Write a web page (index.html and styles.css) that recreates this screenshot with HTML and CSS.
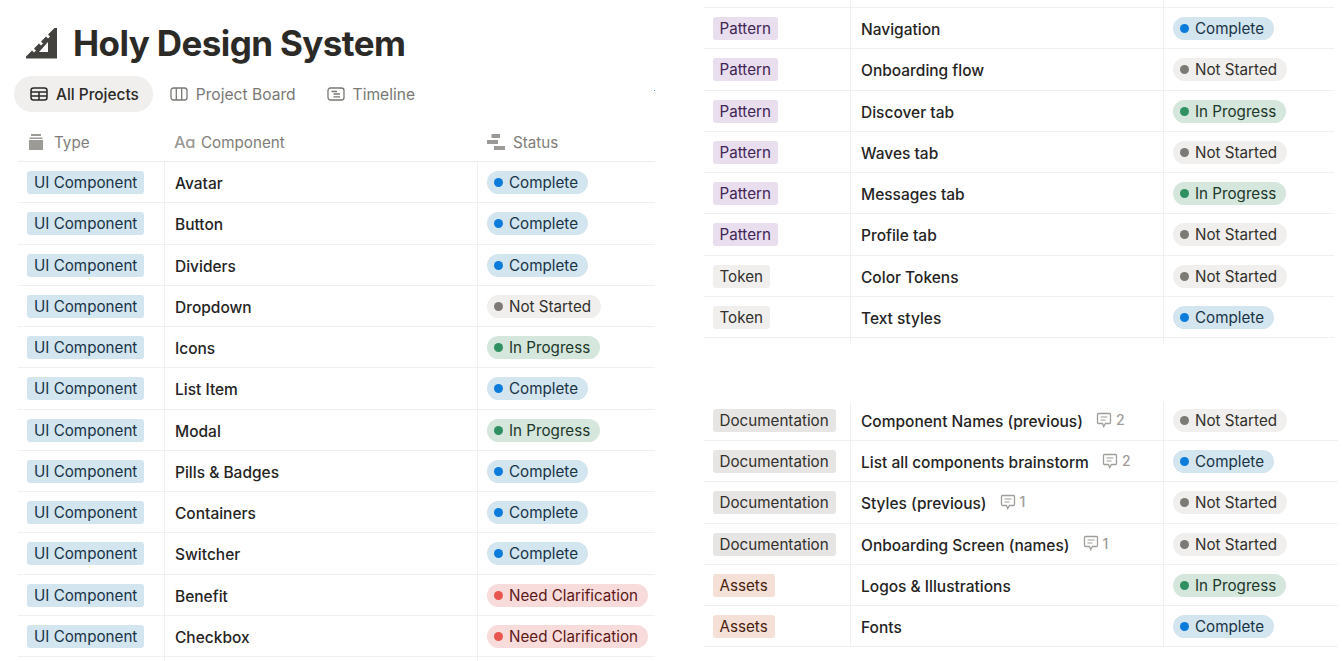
FILE: index.html
```html
<!DOCTYPE html>
<html lang="en">
<head>
<meta charset="utf-8">
<title>Holy Design System</title>
<link rel="stylesheet" href="styles.css">
</head>
<body>
<svg class="sprites" width="0" height="0" aria-hidden="true">
  <symbol id="comment" viewBox="0 0 16 16"><path d="M2.500 1.500h11a1 1 0 0 1 1 1v8a1 1 0 0 1-1 1H9.500l-1.800 3-1.200-3h-4a1 1 0 0 1-1-1v-8a1 1 0 0 1 1-1z" fill="none" stroke="currentColor" stroke-width="1.300"/><path d="M4.500 5h7M4.500 8h5" stroke="currentColor" stroke-width="1.200"/></symbol>
</svg>
<main class="page">
  <section class="left">
    <h1 class="title">
      <svg class="title-icon" viewBox="0 0 31 31"><path fill-rule="evenodd" fill="#44423e" d="M31 0V30.500H0V28.500L6 22.500L8 24.500L10 22.500L8 20.500L13 15.500L15 17.500L17 15.500L15 13.500L20 8.500L22 10.500L24 8.500L22 6.500L28.500 0ZM22 14V24H13Z"/></svg>
      <span>Holy Design System</span>
    </h1>
    <nav class="tabs">
      <a class="tab tab-active">
        <svg class="tab-icon" viewBox="0 0 18 14"><rect x="1" y="1" width="16" height="12" rx="2.500" fill="none" stroke="currentColor" stroke-width="1.500"/><path d="M1 5H17M1 9H17M9 5V13" stroke="currentColor" stroke-width="1.500" fill="none"/></svg>
        All Projects
      </a>
      <a class="tab">
        <svg class="tab-icon" viewBox="0 0 18 14"><rect x="1" y="1" width="16" height="12" rx="2.500" fill="none" stroke="currentColor" stroke-width="1.300"/><path d="M6.300 1V13M11.700 1V13" stroke="currentColor" stroke-width="1.300" fill="none"/></svg>
        Project Board
      </a>
      <a class="tab">
        <svg class="tab-icon" viewBox="0 0 18 14"><rect x="1" y="1" width="16" height="12" rx="2.500" fill="none" stroke="currentColor" stroke-width="1.300"/><path d="M4.500 4.500H10M6.500 7H13M6.500 9.800H13" stroke="currentColor" stroke-width="1.300" fill="none"/></svg>
        Timeline
      </a>
    </nav>
    <div class="table">
      <div class="row row-head">
        <div class="head-cell">
          <svg class="head-icon" viewBox="0 0 16 16"><path fill="#9b9a97" d="M3 0H13V2H3ZM1.500 3.500H14.500V5H1.500ZM1 6H15V16H1Z"/></svg>
          Type
        </div>
        <div class="head-cell head-comp"><span class="aa">Aɑ</span>Component</div>
        <div class="head-cell head-status">
          <svg class="head-icon" viewBox="0 0 18 16"><path fill="#9b9a97" d="M4.500 0H13V4H4.500ZM0 6H11V10H0ZM7 12H18V16H7Z"/></svg>
          Status
        </div>
      </div>
      <div class="row"><div class="cell"><span class="tag t-ui">UI Component</span></div><div class="cell name">Avatar</div><div class="cell"><span class="pill p-complete"><i class="dot"></i>Complete</span></div></div>
      <div class="row"><div class="cell"><span class="tag t-ui">UI Component</span></div><div class="cell name">Button</div><div class="cell"><span class="pill p-complete"><i class="dot"></i>Complete</span></div></div>
      <div class="row"><div class="cell"><span class="tag t-ui">UI Component</span></div><div class="cell name">Dividers</div><div class="cell"><span class="pill p-complete"><i class="dot"></i>Complete</span></div></div>
      <div class="row"><div class="cell"><span class="tag t-ui">UI Component</span></div><div class="cell name">Dropdown</div><div class="cell"><span class="pill p-not"><i class="dot"></i>Not Started</span></div></div>
      <div class="row"><div class="cell"><span class="tag t-ui">UI Component</span></div><div class="cell name">Icons</div><div class="cell"><span class="pill p-progress"><i class="dot"></i>In Progress</span></div></div>
      <div class="row"><div class="cell"><span class="tag t-ui">UI Component</span></div><div class="cell name">List Item</div><div class="cell"><span class="pill p-complete"><i class="dot"></i>Complete</span></div></div>
      <div class="row"><div class="cell"><span class="tag t-ui">UI Component</span></div><div class="cell name">Modal</div><div class="cell"><span class="pill p-progress"><i class="dot"></i>In Progress</span></div></div>
      <div class="row"><div class="cell"><span class="tag t-ui">UI Component</span></div><div class="cell name">Pills &amp; Badges</div><div class="cell"><span class="pill p-complete"><i class="dot"></i>Complete</span></div></div>
      <div class="row"><div class="cell"><span class="tag t-ui">UI Component</span></div><div class="cell name">Containers</div><div class="cell"><span class="pill p-complete"><i class="dot"></i>Complete</span></div></div>
      <div class="row"><div class="cell"><span class="tag t-ui">UI Component</span></div><div class="cell name">Switcher</div><div class="cell"><span class="pill p-complete"><i class="dot"></i>Complete</span></div></div>
      <div class="row"><div class="cell"><span class="tag t-ui">UI Component</span></div><div class="cell name">Benefit</div><div class="cell"><span class="pill p-need"><i class="dot"></i>Need Clarification</span></div></div>
      <div class="row"><div class="cell"><span class="tag t-ui">UI Component</span></div><div class="cell name">Checkbox</div><div class="cell"><span class="pill p-need"><i class="dot"></i>Need Clarification</span></div></div>
      <div class="row row-stub"><div class="cell"></div><div class="cell"></div><div class="cell"></div></div>
    </div>
    <i class="speck"></i>
  </section>
  <section class="right">
    <div class="table table-top">
      <div class="row row-top"><div class="cell"></div><div class="cell"></div><div class="cell"></div></div>
      <div class="row"><div class="cell"><span class="tag t-pattern">Pattern</span></div><div class="cell name">Navigation</div><div class="cell"><span class="pill p-complete"><i class="dot"></i>Complete</span></div></div>
      <div class="row"><div class="cell"><span class="tag t-pattern">Pattern</span></div><div class="cell name">Onboarding flow</div><div class="cell"><span class="pill p-not"><i class="dot"></i>Not Started</span></div></div>
      <div class="row"><div class="cell"><span class="tag t-pattern">Pattern</span></div><div class="cell name">Discover tab</div><div class="cell"><span class="pill p-progress"><i class="dot"></i>In Progress</span></div></div>
      <div class="row"><div class="cell"><span class="tag t-pattern">Pattern</span></div><div class="cell name">Waves tab</div><div class="cell"><span class="pill p-not"><i class="dot"></i>Not Started</span></div></div>
      <div class="row"><div class="cell"><span class="tag t-pattern">Pattern</span></div><div class="cell name">Messages tab</div><div class="cell"><span class="pill p-progress"><i class="dot"></i>In Progress</span></div></div>
      <div class="row"><div class="cell"><span class="tag t-pattern">Pattern</span></div><div class="cell name">Profile tab</div><div class="cell"><span class="pill p-not"><i class="dot"></i>Not Started</span></div></div>
      <div class="row"><div class="cell"><span class="tag t-token">Token</span></div><div class="cell name">Color Tokens</div><div class="cell"><span class="pill p-not"><i class="dot"></i>Not Started</span></div></div>
      <div class="row"><div class="cell"><span class="tag t-token">Token</span></div><div class="cell name">Text styles</div><div class="cell"><span class="pill p-complete"><i class="dot"></i>Complete</span></div></div>
      <div class="row row-tail"><div class="cell"></div><div class="cell"></div><div class="cell"></div></div>
    </div>
    <div class="table table-bottom">
      <div class="row row-first"><div class="cell"><span class="tag t-doc">Documentation</span></div><div class="cell name">Component Names (previous)<span class="count"><svg class="comment"><use href="#comment"/></svg>2</span></div><div class="cell"><span class="pill p-not"><i class="dot"></i>Not Started</span></div></div>
      <div class="row"><div class="cell"><span class="tag t-doc">Documentation</span></div><div class="cell name">List all components brainstorm<span class="count"><svg class="comment"><use href="#comment"/></svg>2</span></div><div class="cell"><span class="pill p-complete"><i class="dot"></i>Complete</span></div></div>
      <div class="row"><div class="cell"><span class="tag t-doc">Documentation</span></div><div class="cell name">Styles (previous)<span class="count"><svg class="comment"><use href="#comment"/></svg>1</span></div><div class="cell"><span class="pill p-not"><i class="dot"></i>Not Started</span></div></div>
      <div class="row"><div class="cell"><span class="tag t-doc">Documentation</span></div><div class="cell name">Onboarding Screen (names)<span class="count"><svg class="comment"><use href="#comment"/></svg>1</span></div><div class="cell"><span class="pill p-not"><i class="dot"></i>Not Started</span></div></div>
      <div class="row"><div class="cell"><span class="tag t-assets">Assets</span></div><div class="cell name">Logos &amp; Illustrations</div><div class="cell"><span class="pill p-progress"><i class="dot"></i>In Progress</span></div></div>
      <div class="row"><div class="cell"><span class="tag t-assets">Assets</span></div><div class="cell name">Fonts</div><div class="cell"><span class="pill p-complete"><i class="dot"></i>Complete</span></div></div>
    </div>
  </section>
</main>
</body>
</html>
```

FILE: styles.css
```css
* { box-sizing: border-box; }
html, body { margin: 0; height: 100%; overflow: hidden; background: #fff; }
body { font-family: Inter, "Liberation Sans", sans-serif; color: #2b2a27; }
.sprites { position: absolute; }

.page { display: flex; height: 661px; overflow: hidden; }
.left { position: relative; width: 655px; flex: none; padding-left: 18px; }
.right { width: 634px; margin-left: 49px; flex: none; }

.title { display: flex; align-items: center; gap: 16px; height: 44px; margin: 21px 0 0 8px; font-size: 35px; line-height: 44px; font-weight: 700; letter-spacing: -0.6px; color: #2b2a27; }
.title-icon { width: 31px; height: 31px; flex: none; }

.tabs { display: flex; gap: 3px; margin: 11px 0 0 -4px; font-size: 15.6px; color: #7a7874; }
.tab { display: flex; align-items: center; gap: 8px; height: 36px; padding: 0 14px; }
.tab-active { padding: 0 14px 0 16px; border-radius: 18px; background: #f0efed; color: #2b2a27; font-weight: 500; font-size: 15.4px; }
.tab-icon { width: 18px; height: 14px; flex: none; }

.row { display: grid; grid-template-columns: 147px 313px 1fr; height: 41.25px; border-bottom: 1.5px solid #f0f0ef; }
.table { margin-top: 13px; }
.row-head { height: 37px; padding-bottom: 2px; border-bottom: 1px solid #eeeeec; }
.head-cell { display: flex; align-items: center; gap: 10px; padding: 0 0 0 10px; font-size: 15.2px; color: #7f7d79; }
.head-comp { gap: 7px; padding-left: 9px; }
.head-status { gap: 8px; padding-left: 9px; }
.head-icon { width: 16px; height: 16px; flex: none; }
.head-status .head-icon { width: 18px; }
.aa { font-size: 16.5px; color: #9b9a97; width: 20px; font-weight: 500; white-space: nowrap; letter-spacing: -0.5px; }

.cell { display: flex; align-items: flex-start; padding: 9px 0 0 9px; border-right: 1.5px solid #f0f0ef; font-size: 15.2px; line-height: 23px; }
.cell:last-child { border-right: 0; }
.name { padding: 10px 0 0 10px; font-size: 15.5px; color: #25241f; font-weight: 450; }
.right .cell:first-child { padding-left: 8.500px; }

.tag { display: inline-block; height: 23px; padding: 0 7px; border-radius: 3px; white-space: nowrap; }
.t-ui { background: #d3e5ef; color: #183347; }
.t-pattern { background: #e8deee; color: #412454; }
.t-token { background: #f0efed; color: #32302c; }
.t-doc { background: #e6e5e3; color: #32302c; }
.t-assets { background: #f5e0d8; color: #49200e; }

.pill { display: inline-flex; align-items: center; gap: 6px; height: 23px; padding: 0 10px 0 7px; border-radius: 12px; white-space: nowrap; }
.dot { width: 9px; height: 9px; border-radius: 50%; flex: none; }
.p-complete { background: #d3e5ef; color: #183347; }
.p-complete .dot { background: #0b7bdc; }
.p-not { background: #f0efed; color: #32302c; }
.p-not .dot { background: #7d7a75; }
.p-progress { background: #d5e6dc; color: #1c3829; }
.p-progress .dot { background: #2f9062; }
.p-need { background: #f8dcdc; color: #5d1715; }
.p-need .dot { background: #e9564f; }

.count { display: inline-flex; align-items: center; gap: 4px; margin: -2px 0 0 13px; height: 23px; font-size: 14px; color: #a09e9a; }
.comment { width: 16px; height: 16px; }

.row-stub { height: 4px; border-bottom: 0; }
.row-top { height: 8px; }
.row-top .cell, .row-tail .cell, .row-stub .cell { padding: 0; }
.row-tail { height: 6px; border-bottom: 0; }
.table-top { margin-top: 0; width: 630px; }
.table-bottom { margin-top: 58px; width: 634px; }
.row-first { height: 39px; }
.row-first .cell { padding-top: 7px; }
.row-first .name { padding-top: 8px; }

.speck { position: absolute; left: 654px; top: 90px; width: 1px; height: 1px; background: #3b8fd8; }
```
